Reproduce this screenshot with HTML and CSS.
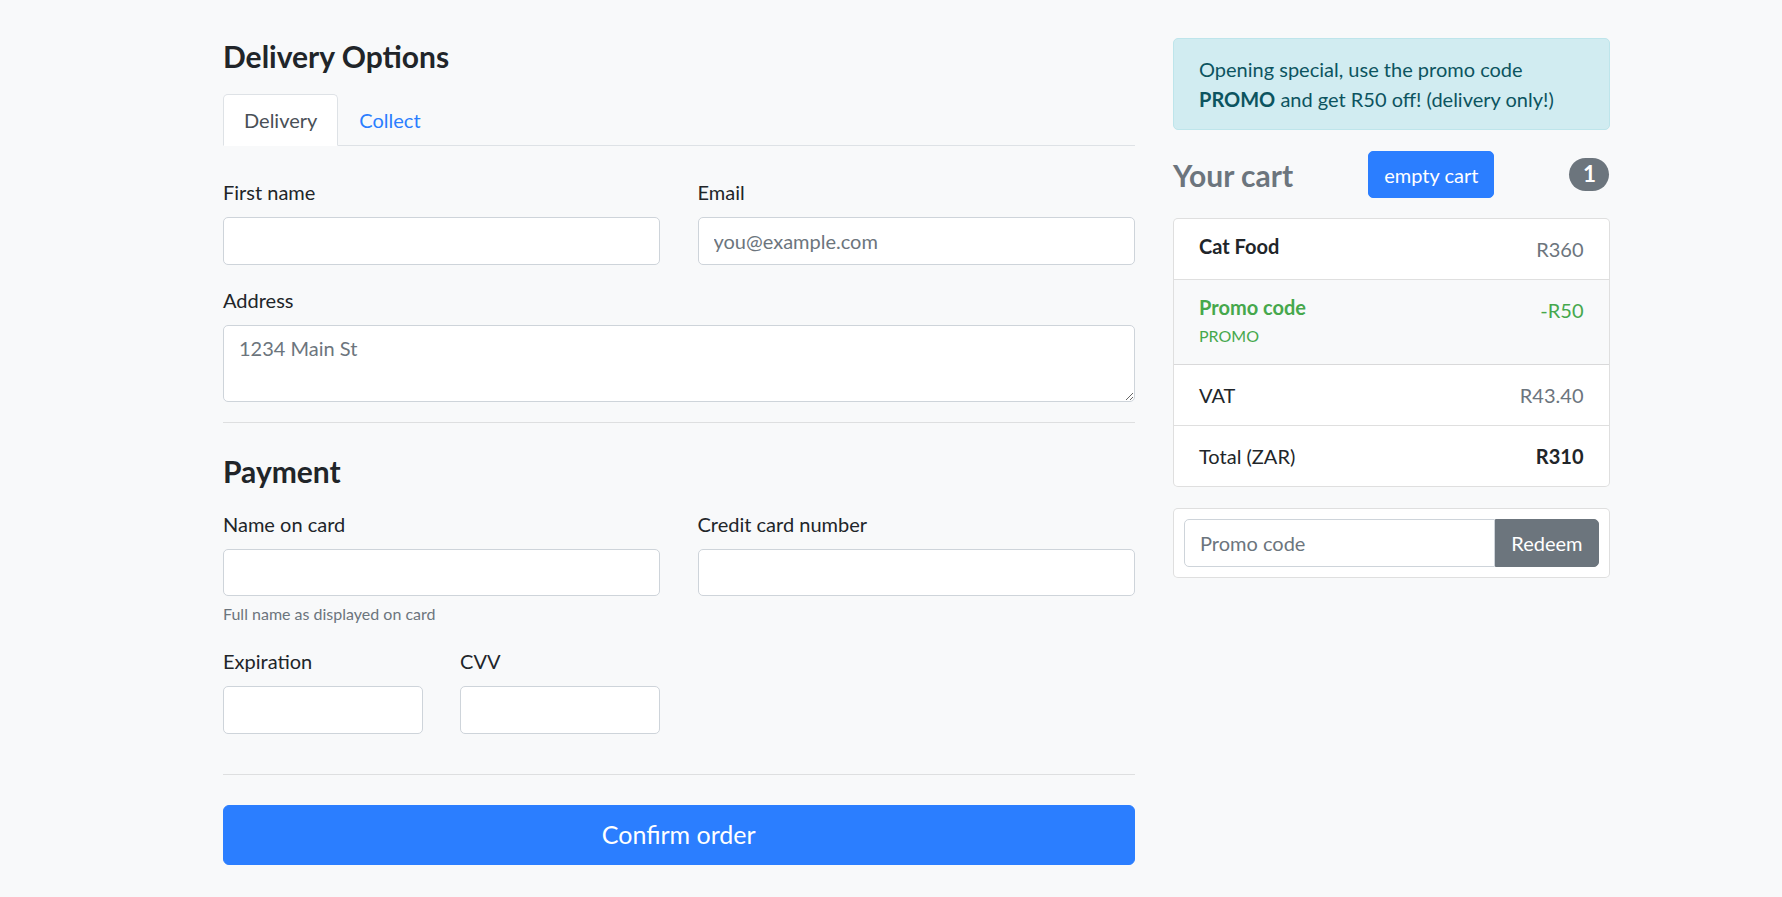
FILE: index.html
```html
<!DOCTYPE html>
<html lang="en">
<head>
<meta charset="utf-8">
<title>Checkout</title>
<link rel="stylesheet" href="styles.css">
</head>
<body>
<div class="page">
  <main class="main-col">
    <h4 class="heading">Delivery Options</h4>
    <ul class="tabs">
      <li><a class="tab tab-active">Delivery</a></li>
      <li><a class="tab">Collect</a></li>
    </ul>
    <form class="form">
      <div class="row-2">
        <div class="group">
          <label class="label">First name</label>
          <input class="input" type="text">
        </div>
        <div class="group">
          <label class="label">Email</label>
          <input class="input" type="text" placeholder="you@example.com">
        </div>
      </div>
      <div class="group">
        <label class="label">Address</label>
        <textarea class="input textarea" rows="2" placeholder="1234 Main St"></textarea>
      </div>
      <hr class="rule">
      <h4 class="heading">Payment</h4>
      <div class="row-2">
        <div class="group">
          <label class="label">Name on card</label>
          <input class="input" type="text">
          <small class="help">Full name as displayed on card</small>
        </div>
        <div class="group">
          <label class="label">Credit card number</label>
          <input class="input" type="text">
        </div>
      </div>
      <div class="row-4">
        <div class="group">
          <label class="label">Expiration</label>
          <input class="input" type="text">
        </div>
        <div class="group">
          <label class="label">CVV</label>
          <input class="input" type="text">
        </div>
      </div>
      <hr class="rule rule-last">
      <button class="btn btn-primary btn-lg" type="button">Confirm order</button>
    </form>
  </main>
  <aside class="side-col">
    <div class="alert">Opening special, use the promo code <strong>PROMO</strong> and get R50 off! (delivery only!)</div>
    <h4 class="cart-head">
      <span class="muted">Your cart</span>
      <button class="btn btn-primary" type="button">empty cart</button>
      <span class="badge">1</span>
    </h4>
    <ul class="list">
      <li class="item">
        <div><h6 class="item-title">Cat Food</h6></div>
        <span class="muted">R360</span>
      </li>
      <li class="item item-light success">
        <div>
          <h6 class="item-title">Promo code</h6>
          <small>PROMO</small>
        </div>
        <span>-R50</span>
      </li>
      <li class="item">
        <span>VAT</span>
        <span class="muted">R43.40</span>
      </li>
      <li class="item">
        <span>Total (ZAR)</span>
        <strong>R310</strong>
      </li>
    </ul>
    <form class="card">
      <div class="input-group">
        <input class="input group-input" type="text" placeholder="Promo code">
        <button class="btn btn-secondary group-btn" type="button">Redeem</button>
      </div>
    </form>
  </aside>
</div>
</body>
</html>
```
FILE: styles.css
```css
*, *::before, *::after { box-sizing: border-box; }

body {
  margin: 0;
  background: #f8f9fa;
  color: #212529;
  font-family: "Lato", "Open Sans", sans-serif;
  font-size: 20px;
  line-height: 1.5;
}

.page {
  display: flex;
  align-items: flex-start;
  gap: 38.5px;
  padding: 38px 0 30px 223px;
}

.main-col { width: 911.5px; flex: none; }
.side-col { width: 436.5px; flex: none; }

.heading {
  margin: 0 0 20px;
  font-size: 30px;
  font-weight: 700;
  line-height: 36px;
  color: #212529;
}

/* tabs */
.tabs {
  display: flex;
  list-style: none;
  margin: 0;
  padding: 0;
  border-bottom: 1px solid #dee2e6;
}
.tabs li { margin-bottom: -1px; }
.tab {
  display: block;
  padding: 10px 20px;
  border: 1px solid transparent;
  border-radius: 5px 5px 0 0;
  color: #2b7eff;
  line-height: 30px;
  cursor: pointer;
}
.tab-active {
  background: #fff;
  color: #495057;
  border-color: #dee2e6 #dee2e6 #fff;
}

/* form */
.form { padding-top: 31px; margin: 0; }
.row-2 {
  display: grid;
  grid-template-columns: 1fr 1fr;
  column-gap: 37.5px;
}
.row-4 {
  display: grid;
  grid-template-columns: 199.6px 199.6px;
  column-gap: 37.5px;
}
.group { margin-bottom: 20px; }
.label {
  display: inline-block;
  margin-bottom: 10px;
}
.input {
  display: block;
  width: 100%;
  height: 47.5px;
  padding: 7.5px 15px;
  font-family: inherit;
  font-size: 20px;
  line-height: 30px;
  color: #495057;
  background: #fff;
  border: 1px solid #ced4da;
  border-radius: 5px;
  margin: 0;
}
.input::placeholder { color: #6c757d; opacity: 1; }
.textarea {
  height: 77px;
  resize: vertical;
}
.help {
  display: block;
  margin-top: 5px;
  font-size: 16px;
  line-height: 25px;
  color: #6c757d;
}
.rule {
  margin: 20px 0 30px;
  border: 0;
  border-top: 1px solid rgba(0, 0, 0, 0.1);
}
.rule-last { margin-top: 20.5px; }

/* buttons */
.btn {
  display: inline-block;
  font-family: inherit;
  font-size: 20px;
  line-height: 30px;
  padding: 7.5px 15px;
  border: 1px solid transparent;
  border-radius: 5px;
  cursor: pointer;
  color: #fff;
}
.btn-primary { background: #2b7eff; border-color: #2b7eff; }
.btn-secondary { background: #6c757d; border-color: #6c757d; }
.btn-lg {
  display: block;
  width: 100%;
  font-size: 25px;
  line-height: 37.5px;
  padding: 10px 20px;
  border-radius: 6px;
}

/* sidebar */
.alert {
  padding: 15px 25px;
  margin-bottom: 21px;
  border: 1px solid #bee5eb;
  border-radius: 5px;
  background: #d1ecf1;
  color: #0c5460;
}
.alert strong { font-weight: 700; }

.cart-head {
  display: flex;
  justify-content: space-between;
  align-items: center;
  margin: 0 0 20px;
  font-size: 30px;
  font-weight: 700;
  line-height: 36px;
}
.cart-head .btn { font-weight: 400; }
.muted { color: #6c757d; }
.badge {
  display: inline-block;
  padding: 5.6px 13.5px;
  font-size: 22.5px;
  font-weight: 700;
  line-height: 1;
  color: #fff;
  background: #6c757d;
  border-radius: 200px;
}

.list {
  list-style: none;
  margin: 0 0 21px;
  padding: 0;
  background: #fff;
  border: 1px solid rgba(0, 0, 0, 0.125);
  border-radius: 5px;
}
.item {
  display: flex;
  justify-content: space-between;
  padding: 15px 25px;
  border-bottom: 1px solid rgba(0, 0, 0, 0.125);
}
.item:last-child { border-bottom: 0; }
.item-light { background: #f8f9fa; }
.item-title {
  margin: 0;
  font-size: 20px;
  font-weight: 700;
  line-height: 24px;
}
.item small { font-size: 16px; }
.success { color: #46a84c; }
.item strong { font-weight: 700; }

.card {
  margin: 0;
  padding: 10px;
  background: #fff;
  border: 1px solid rgba(0, 0, 0, 0.125);
  border-radius: 5px;
}
.input-group { display: flex; }
.group-input {
  flex: 1;
  width: auto;
  min-width: 0;
  border-radius: 5px 0 0 5px;
}
.group-btn { border-radius: 0 5px 5px 0; flex: none; }
```
